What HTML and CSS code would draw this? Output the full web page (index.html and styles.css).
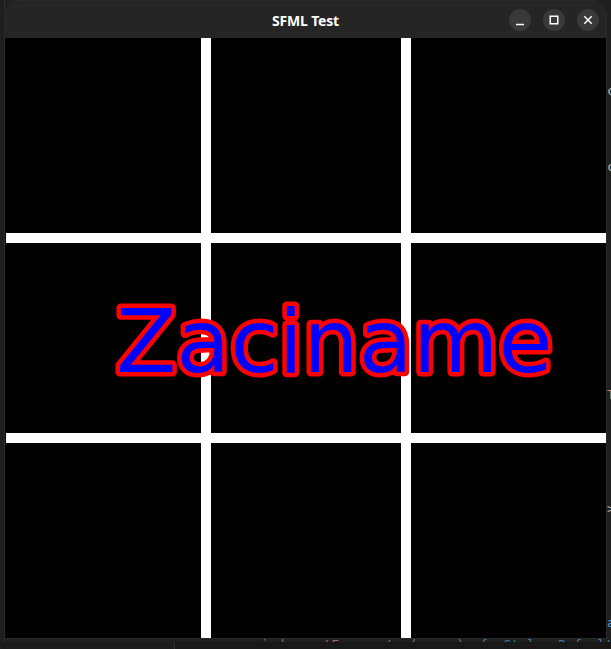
FILE: index.html
```html
<!DOCTYPE html>
<html>
<head>
<meta charset="utf-8">
<title>SFML Test</title>
<link rel="stylesheet" href="styles.css">
</head>
<body>
<div class="desktop">
  <div class="editor">
    <div class="code">
      <div class="ln"><span class="t-def">c</span>onst</div>
      <div class="ln"></div>
      <div class="ln"></div>
      <div class="ln"></div>
      <div class="ln"><span class="t-def">c</span>onst</div>
      <div class="ln"></div><div class="ln"></div><div class="ln"></div>
      <div class="ln"></div><div class="ln"></div><div class="ln"></div>
      <div class="ln"></div><div class="ln"></div><div class="ln"></div>
      <div class="ln"></div><div class="ln"></div>
      <div class="ln"><span class="t-str">T</span>est</div>
      <div class="ln"></div><div class="ln"></div><div class="ln"></div>
      <div class="ln"></div><div class="ln"></div>
      <div class="ln"><span class="t-op">&gt;</span></div>
      <div class="ln"></div><div class="ln"></div><div class="ln"></div>
      <div class="ln"></div><div class="ln"></div>
      <div class="ln"><span class="t-kw">a</span>uto</div>
    </div>
    <div class="bottom">
      <div class="peek"><span class="t-op">  ..  </span><span class="t-str">window.setFramerate</span> <span class="t-op">(cargo)</span> <span class="t-kw">sf::Style::Default</span></div>
      <div class="panel"><div class="panel-left"></div><div class="panel-right"></div></div>
    </div>
  </div>

  <div class="window">
    <div class="titlebar">
      <div></div>
      <div class="title">SFML Test</div>
      <div class="controls">
        <div class="btn">
          <svg width="22" height="22" viewBox="0 0 22 22"><path d="M7 15.5h8" stroke="#fff" stroke-width="1.5" fill="none"/></svg>
        </div>
        <div class="btn">
          <svg width="22" height="22" viewBox="0 0 22 22"><rect x="7.25" y="7.25" width="7.5" height="7.5" stroke="#fff" stroke-width="1.5" fill="none"/></svg>
        </div>
        <div class="btn">
          <svg width="22" height="22" viewBox="0 0 22 22"><path d="M7.3 7.3l7.4 7.4M14.7 7.3l-7.4 7.4" stroke="#fff" stroke-width="1.5" fill="none"/></svg>
        </div>
      </div>
    </div>
    <div class="canvas">
      <div class="vbar c2"></div>
      <div class="vbar c4"></div>
      <div class="hbar r2"></div>
      <div class="hbar r4"></div>
      <svg class="label" width="600" height="600" viewBox="0 0 600 600">
        <text x="110" y="334" font-family="DejaVu Sans" font-size="88" fill="#0000ff" stroke="#ff0000" stroke-width="9" stroke-linejoin="round" paint-order="stroke">Zaciname</text>
      </svg>
    </div>
  </div>
</div>
</body>
</html>
```
FILE: styles.css
```css
html, body {
  margin: 0;
  padding: 0;
  background: #1f1f1f;
  overflow: hidden;
}

.desktop {
  position: relative;
  width: 611px;
  height: 649px;
  overflow: hidden;
  background: #1f1f1f;
  font-family: "DejaVu Sans Mono", monospace;
}

.editor {
  width: 611px;
  height: 649px;
  display: flex;
  flex-direction: column;
  border-left: 1px solid transparent;
  box-sizing: border-box;
  background: linear-gradient(to right, #1e1e1e 0, #1e1e1e 3px, #2c2c2c 3px, #2c2c2c 4px, #1f1f1f 4px);
}

.code {
  padding-top: 81px;
  padding-left: 606px;
  height: 557px;
  box-sizing: border-box;
  font-size: 13px;
  line-height: 19px;
  color: #9a9a9a;
  white-space: nowrap;
}

.ln {
  height: 19px;
}

.t-def { color: #b8b8a8; }
.t-str { color: #ce9178; }
.t-op  { color: #a8a8a8; }
.t-kw  { color: #569cd6; }

.bottom {
  margin-top: auto;
  display: flex;
  flex-direction: column;
}

.peek {
  height: 5px;
  overflow: hidden;
  padding-left: 205px;
  font-size: 13px;
  line-height: 15px;
  color: #8a8a8a;
  white-space: pre;
  opacity: 0.7;
}

.panel {
  height: 7px;
  display: flex;
}

.panel-left {
  width: 173px;
  background: #1c1c1c;
  border-right: 1px solid #2e2e2e;
}

.panel-right {
  flex: 1;
  background: #181818;
}

.window {
  position: absolute;
  left: 5px;
  top: 1px;
  width: 601px;
  background: #000;
  border-radius: 12px 12px 0 0;
  overflow: hidden;
  box-shadow: 0 0 0 1px #2a2a2a;
}

.titlebar {
  height: 37px;
  background: #252525;
  display: grid;
  grid-template-columns: 1fr auto 1fr;
  align-items: center;
}

.title {
  color: #ffffff;
  font-family: "Noto Sans", sans-serif;
  font-weight: 700;
  font-size: 14px;
  letter-spacing: -0.2px;
  padding-top: 1px;
}

.controls {
  display: flex;
  justify-content: flex-end;
  gap: 12px;
  padding-right: 7px;
}

.btn {
  width: 22px;
  height: 22px;
  border-radius: 50%;
  background: #393939;
  display: flex;
}

.canvas {
  position: relative;
  margin-left: 1px;
  width: 600px;
  height: 600px;
  background: #000;
  display: grid;
  grid-template-columns: 195px 10px 190px 10px 195px;
  grid-template-rows: 195px 10px 190px 10px 195px;
}

.vbar {
  background: #fff;
  grid-row: 1 / 6;
}
.vbar.c2 { grid-column: 2; }
.vbar.c4 { grid-column: 4; }

.hbar {
  background: #fff;
  grid-column: 1 / 6;
}
.hbar.r2 { grid-row: 2; }
.hbar.r4 { grid-row: 4; }

.label {
  position: absolute;
  left: 0;
  top: 0;
}
```
